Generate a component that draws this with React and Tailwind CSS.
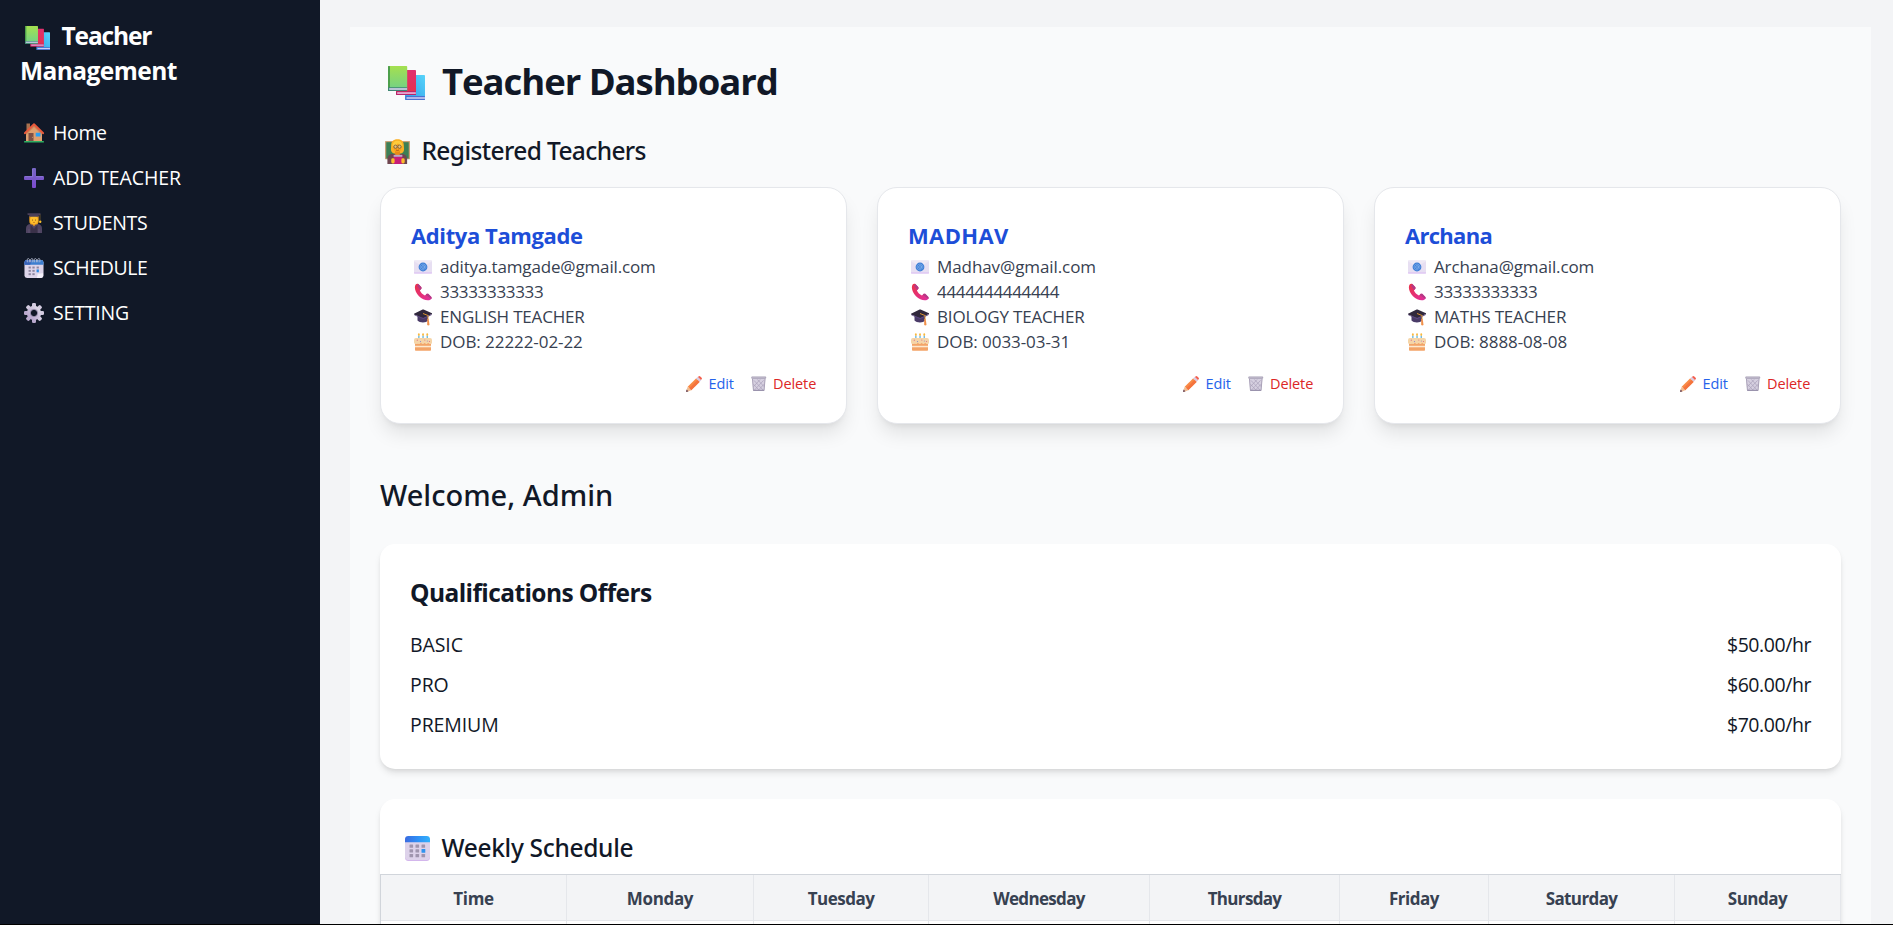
import React from "react";

function BooksIcon({ className }) {
  return (
    <svg viewBox="0 0 37 34" className={className} preserveAspectRatio="none">
      <defs>
        <linearGradient id="bookGreen" x1="0" y1="0" x2="0" y2="1">
          <stop offset="0" stopColor="#a5e04f" />
          <stop offset="1" stopColor="#6fd08a" />
        </linearGradient>
        <linearGradient id="bookRed" x1="0" y1="0" x2="0" y2="1">
          <stop offset="0" stopColor="#e0306f" />
          <stop offset="1" stopColor="#e8304a" />
        </linearGradient>
        <linearGradient id="bookBlue" x1="1" y1="0" x2="0" y2="1">
          <stop offset="0" stopColor="#58d4fa" />
          <stop offset="1" stopColor="#2f9be8" />
        </linearGradient>
      </defs>
      <rect x="17" y="9" width="20" height="25" rx="0.8" fill="url(#bookBlue)" />
      <rect x="17.4" y="30" width="19.6" height="4" rx="0.8" fill="#4a72d0" />
      <rect x="18.5" y="31.3" width="18.5" height="1.4" fill="#dcd6f5" />
      <rect x="8" y="4" width="20" height="25" rx="0.8" fill="url(#bookRed)" />
      <rect x="8" y="25.2" width="20" height="3.8" rx="0.8" fill="#b8256b" />
      <rect x="9.2" y="26.3" width="18.6" height="1.5" fill="#ecc4e6" />
      <rect x="0" y="0" width="19.2" height="25" rx="0.8" fill="url(#bookGreen)" />
      <rect x="0" y="0" width="2" height="25" rx="0.6" fill="#4d9f4b" />
      <rect x="0" y="21.2" width="19.2" height="3.8" rx="0.8" fill="#3f8577" />
      <rect x="1.2" y="22.2" width="17.9" height="1.6" fill="#d8d4ee" />
    </svg>
  );
}

function TeacherIcon({ className }) {
  return (
    <svg viewBox="0 0 26 26" className={className}>
      <rect x="0" y="2" width="26" height="19" rx="0.6" fill="#c9a27a" />
      <rect x="1.3" y="3.3" width="23.4" height="17" fill="#3d7f55" />
      <path d="M2.500 26v-5c0-3 2-5.500 5-5.500h10.500c3 0 5 2.500 5 5.500v5z" fill="#6f4550" />
      <path d="M13 0.300c4.600 0 6.600 2.700 6.600 6.500 0 2.500.8 4.500-.6 6.700-1.300 1.700-3.600 1.700-6 1.700s-4.700 0-6-1.700c-1.400-2.200-.6-4.200-.6-6.700 0-3.800 2-6.500 6.600-6.500z" fill="#fbb024" />
      <path d="M10.500 12h5v4l-2.500 2.500-2.500-2.500z" fill="#e88a17" />
      <ellipse cx="13" cy="8.800" rx="4.200" ry="4.700" fill="#f59f1e" />
      <path d="M7.700 7.500c3 0 4.800-1.300 5.800-3.200 1 1.900 2.800 3 4.800 3.200-.3-3.700-2.400-5.600-5.300-5.600s-5 1.900-5.300 5.600z" fill="#ffcc3d" />
      <circle cx="10.900" cy="8" r="1.700" fill="#f0c074" stroke="#5f523f" strokeWidth="0.800" />
      <circle cx="15.100" cy="8" r="1.700" fill="#f0c074" stroke="#5f523f" strokeWidth="0.800" />
      <path d="M11.500 11.500q1.500 1 3 0" stroke="#a14a12" strokeWidth="0.800" fill="none" />
      <rect x="9" y="17" width="9" height="9" fill="#c81e78" />
      <rect x="9" y="16.500" width="9" height="2" fill="#b9a9c4" />
      <rect x="6.500" y="20" width="3.500" height="5.500" rx="1.500" fill="#fdbb2d" />
      <rect x="17" y="20" width="3.500" height="5.500" rx="1.500" fill="#fdbb2d" />
    </svg>
  );
}

function HomeIcon({ className }) {
  return (
    <svg viewBox="0 0 20 20" className={className}>
      <rect x="2.500" y="0.500" width="3.500" height="7" fill="#a9714f" />
      <path d="M2 18.500V9.500L10 2l8 7.500v9z" fill="#dfa06f" />
      <path d="M2 18.500V12l8-8 8 8v-1.500L10 2 2 9.500z" fill="#c9855b" />
      <path d="M0.800 10.200L10 1.300l9.200 8.900" stroke="#ea5a3c" strokeWidth="1.900" fill="none" strokeLinecap="round" strokeLinejoin="round" />
      <rect x="4.500" y="10" width="5" height="8.500" fill="#7d5146" />
      <circle cx="8.400" cy="14.200" r="0.500" fill="#d9a679" />
      <rect x="11.700" y="9.700" width="4.800" height="3.800" rx="0.300" fill="#2ba0f2" />
      <rect x="0" y="18" width="20" height="1.600" rx="0.700" fill="#2fae62" />
    </svg>
  );
}

function PlusIcon({ className }) {
  return (
    <svg viewBox="0 0 20 20" className={className}>
      <defs>
        <linearGradient id="plusFill" x1="0" y1="0" x2="0" y2="1">
          <stop offset="0" stopColor="#7666c4" />
          <stop offset="1" stopColor="#7d4bd0" />
        </linearGradient>
      </defs>
      <path d="M9 0h2a1 1 0 0 1 1 1v7h7a1 1 0 0 1 1 1v2a1 1 0 0 1-1 1h-7v7a1 1 0 0 1-1 1H9a1 1 0 0 1-1-1v-7H1a1 1 0 0 1-1-1V9a1 1 0 0 1 1-1h7V1a1 1 0 0 1 1-1z" fill="url(#plusFill)" />
      <path d="M1 8.700h7.700V1M12 8.700h7" stroke="#9283d6" strokeWidth="0.700" fill="none" />
    </svg>
  );
}

function StudentIcon({ className }) {
  return (
    <svg viewBox="0 0 20 20" className={className}>
      <path d="M2 20v-4.500c0-3 2-4.500 4.500-4.500h7c2.500 0 4.500 1.500 4.500 4.500V20z" fill="#4f4461" />
      <path d="M6.500 11.500L10 16l3.500-4.500V20h-7z" fill="#3a3149" />
      <path d="M5.300 3h9.400v5c0 2.200-1 3.500-2 3.500H7.300c-1 0-2-1.300-2-3.500z" fill="#e89a1b" />
      <ellipse cx="10" cy="7" rx="3.900" ry="4.300" fill="#fdbd2c" />
      <circle cx="8.500" cy="7" r="0.500" fill="#6b3f1a" />
      <circle cx="11.500" cy="7" r="0.500" fill="#6b3f1a" />
      <path d="M9 9.300q1 .6 2 0" stroke="#a4501a" strokeWidth="0.500" fill="none" />
      <path d="M8.300 11h3.400L10 13.500z" fill="#f3a01f" />
      <path d="M3.500 0.300h13v1.400l-1.800.5v1.600H5.300V2.200l-1.800-.5z" fill="#4b4059" />
      <path d="M16 1.500v6" stroke="#9c7a2c" strokeWidth="0.600" />
      <circle cx="16.200" cy="8.700" r="1.200" fill="#fbbf2c" />
      <path d="M5 16v4M15 16v4" stroke="#6a5d7d" strokeWidth="0.600" />
    </svg>
  );
}

function SpiralCalendarIcon({ className }) {
  return (
    <svg viewBox="0 0 20 21" className={className}>
      <rect x="0" y="2" width="20" height="19" rx="2.600" fill="#ddd5ea" />
      <path d="M0 7V4.600A2.600 2.600 0 0 1 2.600 2h14.800A2.600 2.600 0 0 1 20 4.600V7z" fill="#3d7fd0" />
      <path d="M0 7V4.600A2.600 2.600 0 0 1 2.600 2H8L6 7z" fill="#3561b8" />
      <path d="M3 4.500q-1-4 1-4t1 4M6.700 4.500q-1-4 1-4t1 4M10.400 4.500q-1-4 1-4t1 4M14.100 4.500q-1-4 1-4t1 4" stroke="#bcc3d8" strokeWidth="0.900" fill="none" />
      <g fill="#8d86a0">
        <rect x="4.300" y="9" width="2.400" height="2" /><rect x="8.300" y="9" width="2.400" height="2" /><rect x="12.700" y="9" width="2.400" height="2" />
        <rect x="4.300" y="12.500" width="2.400" height="2" /><rect x="8.300" y="12.500" width="2.400" height="2" />
        <rect x="4.300" y="16" width="2.400" height="2" /><rect x="8.300" y="16" width="2.400" height="2" />
      </g>
      <rect x="12.700" y="12" width="2.400" height="3" fill="#2b8ae6" />
      <path d="M13 21l1-4.500 5.500-.5v2.400A2.600 2.600 0 0 1 17.400 21z" fill="#f4f0fa" />
    </svg>
  );
}

const gearTeeth = [0, 45, 90, 135, 180, 225, 270, 315];

function GearIcon({ className }) {
  return (
    <svg viewBox="0 0 20 20" className={className}>
      <defs>
        <linearGradient id="gearFill" x1="0" y1="1" x2="1" y2="0">
          <stop offset="0" stopColor="#b6a3cc" />
          <stop offset="1" stopColor="#dfdae8" />
        </linearGradient>
      </defs>
      <g>
        {gearTeeth.map((a) => (
          <rect key={a} x="8" y="0" width="4" height="5" rx="1.300" fill={a > 160 && a < 300 ? "#b9a8cd" : "#d3cbe0"} transform={`rotate(${a} 10 10)`} />
        ))}
      </g>
      <circle cx="10" cy="10" r="5.200" fill="none" stroke="url(#gearFill)" strokeWidth="4" />
      <circle cx="10" cy="10" r="3.700" fill="none" stroke="#8f84a3" strokeWidth="0.900" />
    </svg>
  );
}

function MailIcon({ className }) {
  return (
    <svg viewBox="0 0 18 18" className={className}>
      <rect x="0" y="2.500" width="18" height="13" rx="0.800" fill="#e7dff2" />
      <path d="M0 3.200l9 5.600 9-5.600v-.2a.6.600 0 0 0-.6-.5H.6a.6.600 0 0 0-.6.500z" fill="#efe9f5" />
      <path d="M0 14.500h18v.4a.6.600 0 0 1-.6.600H.6a.6.600 0 0 1-.6-.6z" fill="#dcbcf3" />
      <circle cx="9" cy="9" r="4.400" fill="#3f7fd6" />
      <circle cx="9" cy="9" r="1.400" fill="none" stroke="#8ab6ee" strokeWidth="0.700" />
      <path d="M10.400 7.500v2.300c0 1.200 1.500 1 1.500-.6A2.900 2.900 0 1 0 10.300 11.600" stroke="#8ab6ee" strokeWidth="0.600" fill="none" />
    </svg>
  );
}

function PhoneIcon({ className }) {
  return (
    <svg viewBox="0 0 18 18" className={className}>
      <defs>
        <linearGradient id="phoneFill" x1="0" y1="0" x2="1" y2="1">
          <stop offset="0" stopColor="#ea3248" />
          <stop offset="1" stopColor="#e02fa0" />
        </linearGradient>
      </defs>
      <path d="M1.500 1.800C0 4.500 1.200 9.500 5 13.200c3.600 3.600 8.500 4.900 11.300 3.500 1.300-.7 1.700-2 .9-2.900l-2.500-2.500c-.7-.6-1.700-.6-2.400 0l-1.400 1.200c-2.300-1-4-2.700-5-5L7 6.100c.6-.7.6-1.700 0-2.400L4.600 1.200c-.9-.9-2.500-.5-3.100.6z" fill="url(#phoneFill)" />
      <path d="M4.400 1l2.800 2.900c.5.700.5 1.500 0 2.100l-1 .9L3 2.600zM12.200 11.300c.7-.6 1.800-.6 2.500 0l2.600 2.700c.5.600.5 1.300.1 1.900l-5.500-3.800z" fill="#b23a86" />
    </svg>
  );
}

function CapIcon({ className }) {
  return (
    <svg viewBox="0 0 18 18" className={className}>
      <path d="M3.500 7h10.500v5.500c-1.500 2.500-8.500 2.500-10.500 0z" fill="#4a3b68" />
      <path d="M0 5.800L8.600 1.600q.5-.2 1 0L18 5.300q.3.300 0 .6L9.600 9.800q-.5.200-1 0L0.100 6.500q-.3-.3-.1-.7z" fill="#30283c" />
      <path d="M0.200 6.500l8.400 3.300q.5.200 1 0L17.800 6l-.2.900-8 4q-.5.200-1 0L.5 7.300z" fill="#5c4880" />
      <path d="M9 5.500l5 2v4" stroke="#d99332" strokeWidth="1" fill="none" />
      <path d="M13.200 11h1.500l.8 6q-1.200.8-2.300 0z" fill="#f0904a" />
    </svg>
  );
}

function CakeIcon({ className }) {
  return (
    <svg viewBox="0 0 18 18" className={className}>
      <g fill="#63b5dc"><rect x="4.200" y="2.500" width="1.300" height="4" /><rect x="8.400" y="2.500" width="1.300" height="4" /><rect x="12.600" y="2.500" width="1.300" height="4" /></g>
      <g fill="#fbb83a"><ellipse cx="4.850" cy="1.600" rx="0.900" ry="1.300" /><ellipse cx="9.050" cy="1.600" rx="0.900" ry="1.300" /><ellipse cx="13.250" cy="1.600" rx="0.900" ry="1.300" /></g>
      <path d="M1 8h16v9q0 .7-.7.700H1.700Q1 17.700 1 17z" fill="#f3a468" />
      <rect x="1" y="12.800" width="16" height="1.500" fill="#fde9cf" />
      <path d="M2 5h14q2 0 2 2v2.500q0 1.500-1.500 1.500T15 10.500q-.8-1-1.600 0t-2 0q-.8-1-1.600 0t-2 0-1.700 0-2.100.3Q3.500 11 2 11 0 11 0 9.500V7q0-2 2-2z" fill="#f5d5a8" />
      <g fill="#dd6d88"><circle cx="3.300" cy="7.200" r="0.600" /><circle cx="10.800" cy="7" r="0.600" /><circle cx="15.500" cy="8.500" r="0.600" /></g>
      <g fill="#8c86c9"><circle cx="6.500" cy="8.600" r="0.600" /><circle cx="13.300" cy="8" r="0.500" /></g>
    </svg>
  );
}

function PencilIcon({ className }) {
  return (
    <svg viewBox="0 0 16 16" className={className}>
      <path d="M11.700 1.100L13 .2q.7-.4 1.300.2l1.300 1.300q.6.600.2 1.300l-1 1.300z" fill="#f4604e" />
      <path d="M9.900 2.600l1.900-1.700 3.400 3.400-1.800 1.800z" fill="#d9cbe2" />
      <path d="M1.700 10.800l8.300-8.300 3.500 3.500-8.300 8.300z" fill="#f98a45" />
      <path d="M3.200 12.300L11.600 4l1.900 2-8.300 8.300z" fill="#f4733e" />
      <path d="M1.700 10.800l3.500 3.500-4.200 1.600q-1 .2-.8-.8z" fill="#f0bd92" />
      <path d="M.7 13.600l1.700 1.700-1.500.6q-.9.200-.8-.8z" fill="#6b4a5e" />
    </svg>
  );
}

function TrashIcon({ className }) {
  return (
    <svg viewBox="0 0 16 16" className={className}>
      <path d="M1.200 2h13.600l-1 12.500q-.1 1.300-1.400 1.300H3.600q-1.300 0-1.400-1.300z" fill="#d6d0e0" />
      <path d="M3 4.500l9.500 10M6.500 3.500l7 7.500M2.600 8.500l6.500 7M13 4.500L3.500 14.500M9.500 3.500L2.600 11M13.400 8.500l-6.500 7" stroke="#a89fb8" strokeWidth="0.700" />
      <path d="M1.500 3l1 11.500q.1.700.8.700h9.400q.7 0 .8-.7l1-11.500" stroke="#a79fb6" strokeWidth="1" fill="none" />
      <rect x="2.400" y="14.300" width="11.200" height="1.500" rx="0.600" fill="#9a93ad" />
      <rect x="0.300" y="0.500" width="15.400" height="2.400" rx="0.800" fill="#a8a1b6" />
      <rect x="1" y="0.700" width="14" height="0.800" rx="0.400" fill="#cbc5d5" />
    </svg>
  );
}

function CalendarIcon({ className }) {
  return (
    <svg viewBox="0 0 25 25" className={className}>
      <defs>
        <linearGradient id="calHead" x1="0" y1="0" x2="1" y2="0">
          <stop offset="0" stopColor="#3a6be0" />
          <stop offset="0.500" stopColor="#2f8ff5" />
          <stop offset="1" stopColor="#33b1fb" />
        </linearGradient>
      </defs>
      <rect x="0" y="1" width="25" height="24" rx="3.400" fill="#d3b6ec" />
      <rect x="0" y="1" width="25" height="23" rx="3.400" fill="#ddd2ea" />
      <path d="M0 6.200V3.400A3.400 3.400 0 0 1 3.400 0h18.200A3.400 3.400 0 0 1 25 3.400v2.800z" fill="url(#calHead)" />
      <g fill="#a095ae">
        <rect x="4.500" y="8.500" width="3.600" height="3.200" rx="0.500" /><rect x="10.500" y="8.500" width="3.600" height="3.200" rx="0.500" /><rect x="16.500" y="8.500" width="3.600" height="3.200" rx="0.500" />
        <rect x="4.500" y="13.300" width="3.600" height="3.200" rx="0.500" /><rect x="10.500" y="13.300" width="3.600" height="3.200" rx="0.500" />
        <rect x="4.500" y="18.100" width="3.600" height="3.200" rx="0.500" /><rect x="10.500" y="18.100" width="3.600" height="3.200" rx="0.500" /><rect x="16.500" y="18.100" width="3.600" height="3.200" rx="0.500" />
      </g>
      <rect x="16.500" y="13.100" width="3.800" height="3.600" rx="0.500" fill="#2f93ee" />
    </svg>
  );
}

const navItems = [
  { label: "Home", Icon: HomeIcon, text: "tracking-[-0.018em]" },
  { label: "ADD TEACHER", Icon: PlusIcon, text: "tracking-[-0.006em]" },
  { label: "STUDENTS", Icon: StudentIcon, text: "tracking-[-0.015em]" },
  { label: "SCHEDULE", Icon: SpiralCalendarIcon, text: "tracking-[-0.02em]" },
  { label: "SETTING", Icon: GearIcon, text: "tracking-[-0.009em]" },
];

const teachers = [
  { name: "Aditya Tamgade", nameClass: "tracking-[-0.018em]", email: "aditya.tamgade@gmail.com", emailClass: "tracking-[-0.009em]", phone: "33333333333", subject: "ENGLISH TEACHER", dob: "22222-02-22" },
  { name: "MADHAV", nameClass: "tracking-[0.016em]", email: "Madhav@gmail.com", emailClass: "tracking-[-0.005em]", phone: "4444444444444", subject: "BIOLOGY TEACHER", dob: "0033-03-31" },
  { name: "Archana", nameClass: "tracking-[-0.032em]", email: "Archana@gmail.com", emailClass: "tracking-[-0.008em]", phone: "33333333333", subject: "MATHS TEACHER", dob: "8888-08-08" },
];

const offers = [
  { name: "BASIC", price: "$50.00/hr" },
  { name: "PRO", price: "$60.00/hr" },
  { name: "PREMIUM", price: "$70.00/hr" },
];

const columns = [
  { label: "Time", text: "tracking-[-0.015em]" },
  { label: "Monday", text: "tracking-[-0.02em]" },
  { label: "Tuesday", text: "tracking-[-0.03em]" },
  { label: "Wednesday", text: "tracking-[-0.04em]" },
  { label: "Thursday", text: "tracking-[-0.04em]" },
  { label: "Friday", text: "tracking-[-0.028em]" },
  { label: "Saturday", text: "tracking-[-0.036em]" },
  { label: "Sunday", text: "tracking-[-0.03em]" },
];

function Detail({ Icon, className, children }) {
  return (
    <li className="flex h-[25px] items-center gap-2 pl-[3px]">
      <Icon className="size-[18px] shrink-0" />
      <span className={className}>{children}</span>
    </li>
  );
}

function TeacherCard({ teacher }) {
  return (
    <article className="h-[237px] rounded-[20px] border border-[#e5e7eb] bg-white p-[30px] shadow-[0_12.5px_18.75px_-3.75px_rgba(0,0,0,0.1),0_5px_7.5px_-5px_rgba(0,0,0,0.1)]">
      <h3 className={`text-[22px] leading-[35px] font-bold text-[#1d4ed8] ${teacher.nameClass}`}>{teacher.name}</h3>
      <ul className="pt-px text-[17px] leading-[25px] text-[#374151]">
        <Detail Icon={MailIcon} className={teacher.emailClass}>{teacher.email}</Detail>
        <Detail Icon={PhoneIcon} className="tracking-[-0.019em]">{teacher.phone}</Detail>
        <Detail Icon={CapIcon} className="tracking-[-0.01em]">{teacher.subject}</Detail>
        <Detail Icon={CakeIcon} className="tracking-[-0.004em]">DOB: {teacher.dob}</Detail>
      </ul>
      <div className="mt-[19px] flex h-5 justify-end gap-4 text-[14.5px] leading-5">
        <button className="flex w-[49px] items-center gap-[6.500px] text-[#2563eb]">
          <PencilIcon className="mt-px size-4 shrink-0" />
          <span className="pt-px tracking-[-0.01em]">Edit</span>
        </button>
        <button className="flex w-[65px] items-center gap-[6.500px] text-[#dc2626]">
          <TrashIcon className="mt-px size-[15.5px] shrink-0" />
          <span className="pt-px tracking-[-0.006em]">Delete</span>
        </button>
      </div>
    </article>
  );
}

export default function App() {
  return (
    <div className="flex h-[925px] w-full flex-col overflow-hidden font-['Open_Sans','Noto_Sans',sans-serif] text-[#111827]">
      <div className="flex min-h-0 flex-1 overflow-hidden bg-[#f3f4f6]">
        <aside className="w-80 shrink-0 bg-[#111827] pt-[18px] text-white">
          <h2 className="mb-[29px] text-[24.5px] leading-[35px] font-bold">
            <span className="flex items-center pl-[25px]">
              <BooksIcon className="mt-1 mr-[11.500px] h-6 w-[25px]" />
              <span className="tracking-[-0.046em]">Teacher</span>
            </span>
            <span className="block pl-5 tracking-[-0.023em]">Management</span>
          </h2>
          <nav className="flex flex-col gap-[15px] pl-6 text-[19.5px] leading-[30px]">
            {navItems.map(({ label, Icon, text }) => (
              <a key={label} className="flex h-[30px] items-center gap-[9px]">
                <Icon className="mt-0.5 size-5 shrink-0" />
                <span className={`pt-0.5 ${text}`}>{label}</span>
              </a>
            ))}
          </nav>
        </aside>

        <main className="min-w-0 flex-1 pt-[27px] pr-[22px] pl-[30px]">
          <div className="h-[1200px] bg-[#f9fafb] p-[30px]">
            <h1 className="flex h-[45px] items-center pl-2 text-[36.5px] leading-[45px] font-bold">
              <BooksIcon className="mt-[7px] mr-[17px] h-[34px] w-[37px]" />
              <span className="pt-[3px] tracking-[-0.029em]">Teacher Dashboard</span>
            </h1>

            <h2 className="mt-[30px] mb-5 flex h-[35px] items-center pl-[5px] font-['Noto_Sans',sans-serif] text-[24.5px] leading-[35px] font-medium">
              <TeacherIcon className="mt-1 mr-[11.500px] size-[25px]" />
              <span className="pt-px tracking-[-0.025em]">Registered Teachers</span>
            </h2>

            <section className="grid grid-cols-3 gap-[30px]">
              {teachers.map((teacher) => (
                <TeacherCard key={teacher.name} teacher={teacher} />
              ))}
            </section>

            <h2 className="mt-[51px] mb-[29px] font-['Noto_Sans',sans-serif] text-[29px] leading-10 font-medium">Welcome, Admin</h2>

            <section className="h-[225px] rounded-[15px] bg-white p-[30px] shadow-[0_5px_7.5px_-1.25px_rgba(0,0,0,0.1),0_2.5px_5px_-2.5px_rgba(0,0,0,0.1)]">
              <h3 className="mb-[21px] h-[35px] text-[24.5px] leading-[37px] font-bold tracking-[-0.024em]">Qualifications Offers</h3>
              <ul className="flex flex-col gap-2.5 text-[19.5px] leading-[30px]">
                {offers.map((offer) => (
                  <li key={offer.name} className="flex justify-between">
                    <span className="tracking-[-0.005em]">{offer.name}</span>
                    <span className="tracking-[-0.022em]">{offer.price}</span>
                  </li>
                ))}
              </ul>
            </section>

            <section className="mt-[30px] h-[400px] overflow-hidden rounded-[15px] bg-white pt-[30px] shadow-[0_5px_7.5px_-1.25px_rgba(0,0,0,0.1),0_2.5px_5px_-2.5px_rgba(0,0,0,0.1)]">
              <h2 className="mb-2.5 flex h-[35px] items-center pl-[25px] font-['Noto_Sans',sans-serif] text-[24.5px] leading-[35px] font-medium">
                <CalendarIcon className="mt-1 mr-[11.500px] size-[25px]" />
                <span className="pt-px tracking-[-0.013em]">Weekly Schedule</span>
              </h2>
              <div className="grid grid-cols-[186px_187px_175px_221px_190px_149px_186px_1fr] border-t border-l border-[#d1d5db]">
                {columns.map(({ label, text }) => (
                  <div key={label} className="h-[46px] border-r border-b border-[#e5e7eb] bg-[#f3f4f6] text-center text-[17px] leading-[47px] font-bold text-[#374151]">
                    <span className={text}>{label}</span>
                  </div>
                ))}
                {columns.map(({ label }) => (
                  <div key={label} className="h-[46px] border-r border-b border-[#e5e7eb] bg-white" />
                ))}
              </div>
            </section>
          </div>
        </main>
      </div>
      <div className="h-px shrink-0 bg-black" />
    </div>
  );
}
